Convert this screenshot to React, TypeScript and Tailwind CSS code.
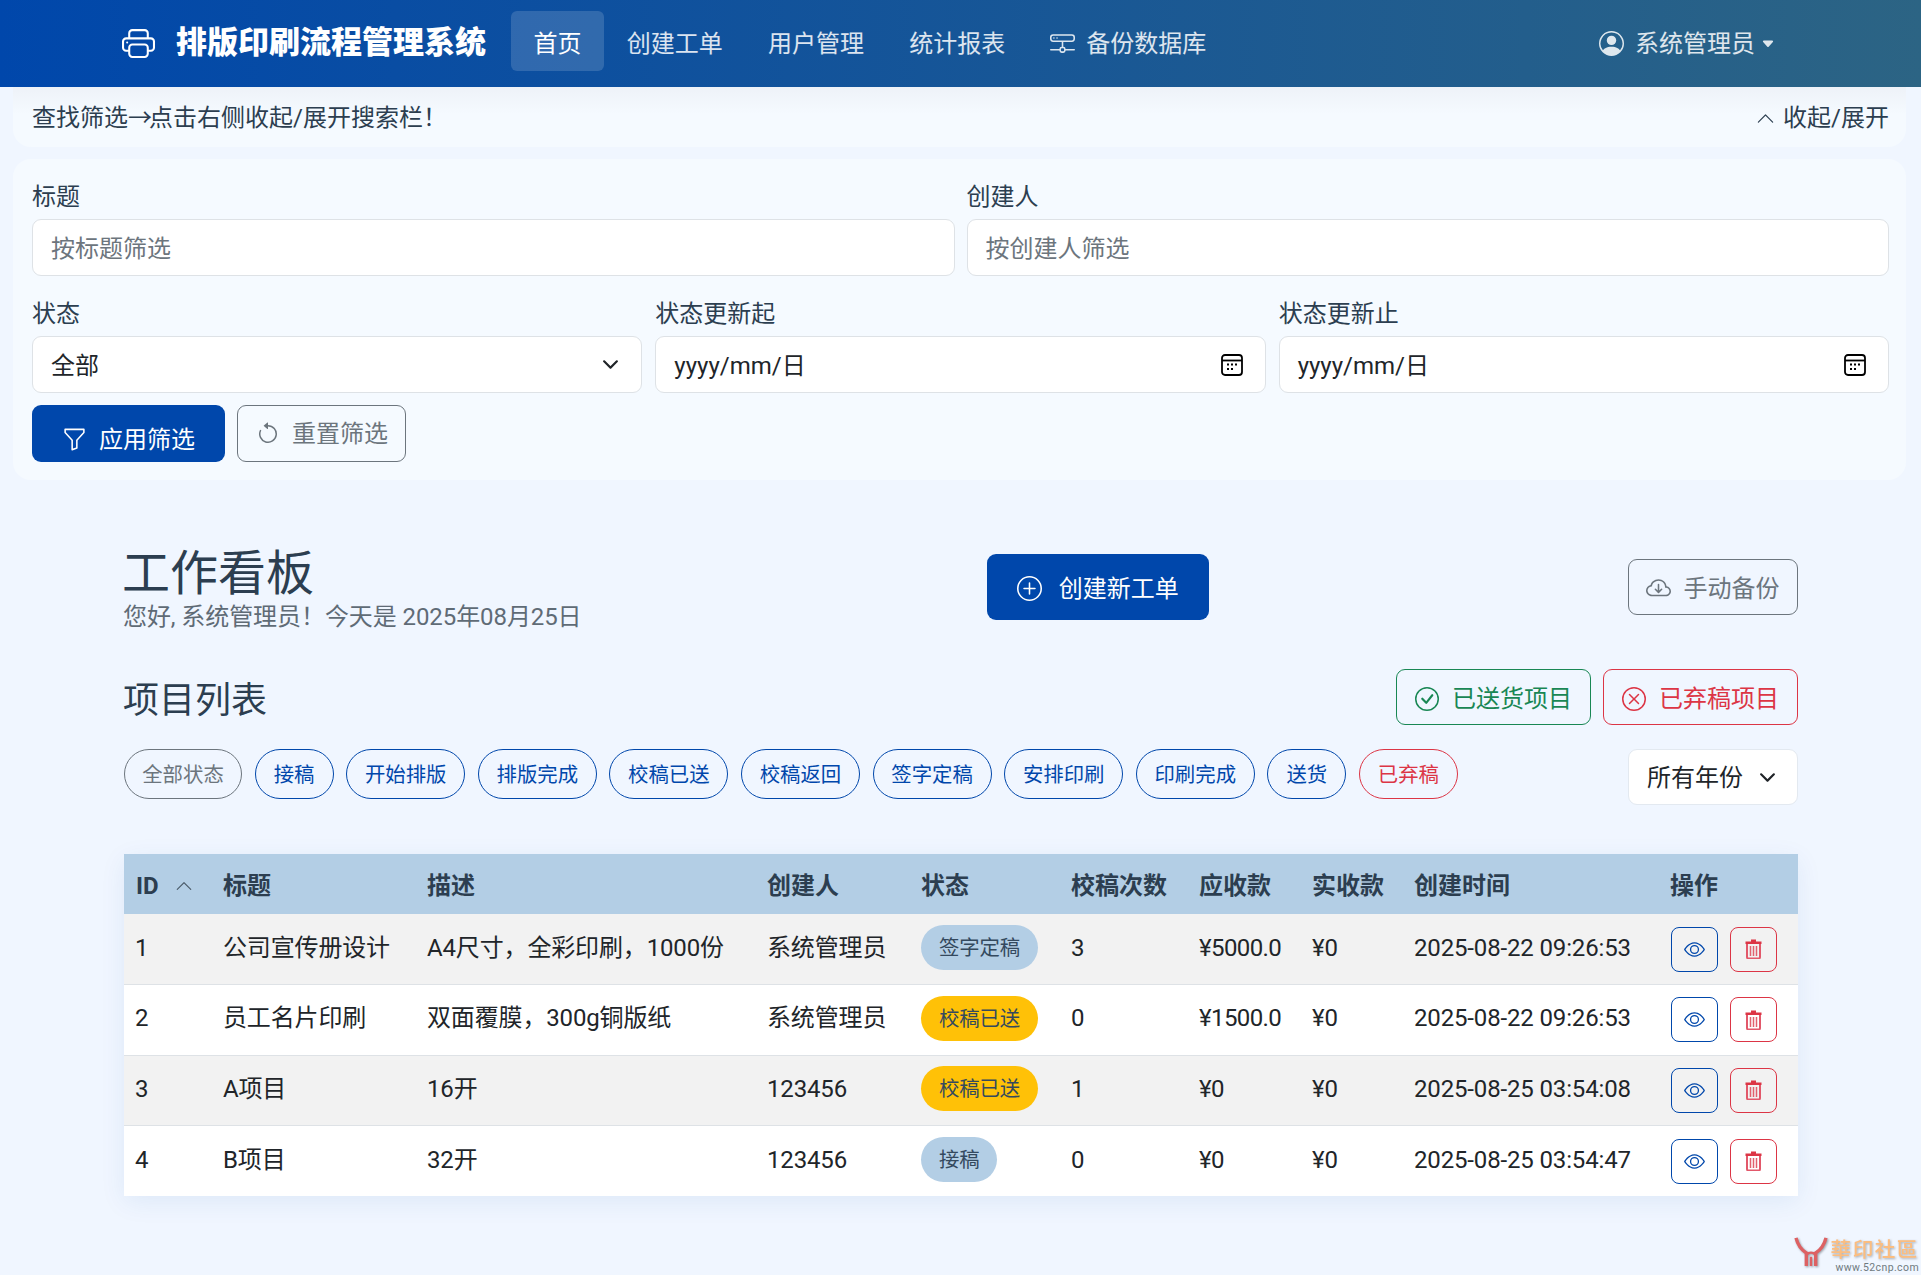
import React from "react";
import {
  BsPrinter, BsHddNetwork, BsPersonCircle, BsCaretDownFill, BsChevronUp, BsChevronDown, BsFunnel,
  BsArrowCounterclockwise, BsPlusCircle, BsCloudArrowDown, BsCheckCircle, BsXCircle, BsEye,
} from "react-icons/bs";

const FONT = "[font-family:Roboto,'Noto_Sans_CJK_SC',sans-serif]";

function Calendar() {
  return (
    <svg width="22" height="22" viewBox="0 0 22 22" fill="none" className="shrink-0 text-black">
      <rect x="1" y="1" width="20" height="20" rx="3" stroke="currentColor" strokeWidth="1.8" />
      <path d="M1 6.500h20" stroke="currentColor" strokeWidth="1.8" />
      <g fill="currentColor">
        <rect x="6" y="9.500" width="2" height="2" />
        <rect x="10" y="9.500" width="2" height="2" />
        <rect x="14" y="9.500" width="2" height="2" />
        <rect x="6" y="14" width="2" height="2" />
        <rect x="10" y="14" width="2" height="2" />
      </g>
    </svg>
  );
}

function Trash() {
  return (
    <svg width="17" height="20" viewBox="0 0 17 20" fill="none">
      <path d="M6 0.500h5v2h5.500v2.500h-16v-2.500h5.500z" fill="#dc3545" />
      <path d="M2 5v13a1.500 1.500 0 0 0 1.500 1.500h10a1.500 1.500 0 0 0 1.500-1.500V5" stroke="#e2586a" strokeWidth="2" />
      <path d="M5.500 7v10M8.500 7v10M11.500 7v10" stroke="#e2606e" strokeWidth="1.500" />
    </svg>
  );
}

function Field({ label, children }: { label: string; children: React.ReactNode }) {
  return (
    <div className="min-w-0">
      <div className="h-9 text-[24px] leading-[29px] text-[#2c3e50]">{label}</div>
      {children}
    </div>
  );
}

const inputCls =
  "block h-[57px] w-full rounded-[9px] border border-[#dee2e6] bg-white px-[18px] pt-[2px] text-[24px] text-[#212529] outline-none placeholder:text-[#6c757d]";

function DateField({ label }: { label: string }) {
  return (
    <Field label={label}>
      <div className="flex h-[57px] w-full items-center justify-between rounded-[9px] border border-[#dee2e6] bg-white pl-[18px] pr-[22px]">
        <span className="pt-[2px] text-[24px] text-[#212529]">yyyy/mm/日</span>
        <Calendar />
      </div>
    </Field>
  );
}

const pills = [
  { t: "全部状态", w: "w-[118px]", c: "border-[#6c757d] text-[#6c757d]" },
  { t: "接稿", w: "w-[79px]", c: "border-[#0047ab] text-[#0047ab]" },
  { t: "开始排版", w: "w-[119px]", c: "border-[#0047ab] text-[#0047ab]" },
  { t: "排版完成", w: "w-[119px]", c: "border-[#0047ab] text-[#0047ab]" },
  { t: "校稿已送", w: "w-[119px]", c: "border-[#0047ab] text-[#0047ab]" },
  { t: "校稿返回", w: "w-[119px]", c: "border-[#0047ab] text-[#0047ab]" },
  { t: "签字定稿", w: "w-[119px]", c: "border-[#0047ab] text-[#0047ab]" },
  { t: "安排印刷", w: "w-[119px]", c: "border-[#0047ab] text-[#0047ab]" },
  { t: "印刷完成", w: "w-[119px]", c: "border-[#0047ab] text-[#0047ab]" },
  { t: "送货", w: "w-[79px]", c: "border-[#0047ab] text-[#0047ab]" },
  { t: "已弃稿", w: "w-[99px]", c: "border-[#dc3545] text-[#dc3545]" },
];

const rows = [
  { id: 1, title: "公司宣传册设计", desc: "A4尺寸，全彩印刷，1000份", by: "系统管理员", st: "签字定稿", tone: "b", n: 3, ar: "¥5000.0", time: "2025-08-22 09:26:53" },
  { id: 2, title: "员工名片印刷", desc: "双面覆膜，300g铜版纸", by: "系统管理员", st: "校稿已送", tone: "y", n: 0, ar: "¥1500.0", time: "2025-08-22 09:26:53" },
  { id: 3, title: "A项目", desc: "16开", by: "123456", st: "校稿已送", tone: "y", n: 1, ar: "¥0", time: "2025-08-25 03:54:08" },
  { id: 4, title: "B项目", desc: "32开", by: "123456", st: "接稿", tone: "b", n: 0, ar: "¥0", time: "2025-08-25 03:54:47" },
];

const th = "px-3 pt-[4px] text-left align-middle text-[24px] font-bold text-[#2c3e50]";
const tdBase = "px-3 pb-[3px] align-middle text-[24px] text-[#212529]";
const td = `${tdBase} tracking-[-0.15px]`;
const navItem = "flex h-[60px] items-center px-[22.6px] pt-[6px]";

export default function App() {
  return (
    <div className={`relative min-h-[1275px] bg-[#f0f6ff] ${FONT}`}>
      <header className="flex h-[87px] items-center bg-[linear-gradient(90deg,#0047ab,#2c6484)] pl-[122px] pr-[146px] text-white">
        <BsPrinter className="mr-[21px] text-[33px]" />
        <span className="mr-[25px] text-[31px] font-black whitespace-nowrap">排版印刷流程管理系统</span>
        <nav className="mb-[6px] flex items-center text-[24px] text-white/85">
          <a className={`${navItem} rounded-[6px] bg-white/15 text-white`}>首页</a>
          <a className={navItem}>创建工单</a>
          <a className={navItem}>用户管理</a>
          <a className={navItem}>统计报表</a>
          <a className={`${navItem} gap-[11px]`}>
            <BsHddNetwork className="text-[25px]" />
            备份数据库
          </a>
        </nav>
        <div className="ml-auto flex items-center text-[24px] text-white/85">
          <BsPersonCircle className="mr-[11px] text-[25px]" />
          系统管理员
          <BsCaretDownFill className="ml-[6px] text-[14px]" />
        </div>
      </header>

      <div className="ml-[13px] mr-[15px]">
        <div className="flex h-[60px] items-center justify-between rounded-b-[18px] bg-[linear-gradient(180deg,#eef2f8,#f5faff_45%)] pl-[19px] pr-[17px] pt-[2px] text-[24px] text-[#2c3e50]">
          <span>
            查找筛选<span className="tracking-[-3px]">→</span>点击右侧收起/展开搜索栏！
          </span>
          <span className="flex items-center gap-[8px]">
            <BsChevronUp className="text-[19px]" />
            收起/展开
          </span>
        </div>

        <section className="mt-3 rounded-[18px] bg-[#f5faff] pb-[18px] pl-[19px] pr-[17px] pt-6">
          <div className="grid grid-cols-2 gap-x-3">
            <Field label="标题">
              <input className={inputCls} placeholder="按标题筛选" />
            </Field>
            <Field label="创建人">
              <input className={inputCls} placeholder="按创建人筛选" />
            </Field>
          </div>
          <div className="mt-6 grid grid-cols-3 gap-x-[13px]">
            <Field label="状态">
              <div className="flex h-[57px] items-center justify-between rounded-[9px] border border-[#dee2e6] bg-white pl-[18px] pr-[22px] text-[24px] text-[#212529]">
                <span className="pt-[2px]">全部</span>
                <BsChevronDown className="text-[17px] [stroke-width:1px] stroke-current" />
              </div>
            </Field>
            <DateField label="状态更新起" />
            <DateField label="状态更新止" />
          </div>
          <div className="mt-3 flex gap-3">
            <button className="flex h-[57px] items-center gap-[12px] rounded-[9px] bg-[#0047ab] pl-[30px] pr-[30px] pt-[12px] text-[24px] text-white">
              <BsFunnel className="text-[25px]" />
              应用筛选
            </button>
            <button className="flex h-[57px] items-center gap-[12px] rounded-[9px] border border-[#6c757d] pl-[18px] pr-[17px] text-[24px] text-[#6c757d]">
              <BsArrowCounterclockwise className="text-[24px]" />
              重置筛选
            </button>
          </div>
        </section>
      </div>

      <main className="ml-[124px] mr-[123px] mt-[61px]">
        <div className="flex items-center justify-between">
          <div>
            <h1 className="-ml-[2px] h-[58px] text-[48px] leading-[65px] font-normal text-[#2c3e50]">工作看板</h1>
            <p className="-ml-px text-[24px] leading-9 tracking-[-0.08px] text-[#5f6b76]">您好, 系统管理员！今天是 2025年08月25日</p>
          </div>
          <button className="mb-[2px] mr-[14px] flex h-[66px] w-[222px] items-center justify-center gap-[17px] rounded-[9px] bg-[#0047ab] pt-[3px] text-[24px] text-white">
            <BsPlusCircle className="text-[25px]" />
            创建新工单
          </button>
          <button className="mb-[2px] flex h-[56px] w-[170px] items-center justify-center gap-3 rounded-[9px] border border-[#6c757d] pt-[3px] text-[24px] text-[#6c757d]">
            <BsCloudArrowDown className="text-[25px]" />
            手动备份
          </button>
        </div>

        <div className="mt-[34px] flex items-center justify-between">
          <h2 className="-ml-px h-[56px] text-[36px] leading-[65px] font-normal text-[#2c3e50]">项目列表</h2>
          <div className="flex gap-[12px]">
            <button className="flex h-[56px] w-[195px] items-center justify-center gap-[13px] rounded-[9px] border border-[#198754] pt-[3px] text-[24px] text-[#198754]">
              <BsCheckCircle className="text-[24px]" />
              已送货项目
            </button>
            <button className="flex h-[56px] w-[195px] items-center justify-center gap-[13px] rounded-[9px] border border-[#dc3545] pt-[3px] text-[24px] text-[#dc3545]">
              <BsXCircle className="text-[24px]" />
              已弃稿项目
            </button>
          </div>
        </div>

        <div className="mt-6 flex items-start justify-between">
          <div className="flex gap-[12.6px]">
            {pills.map((p) => (
              <span key={p.t} className={`flex h-[50px] items-center justify-center rounded-full border-[1.5px] pt-[2px] text-[20.4px] ${p.w} ${p.c}`}>
                {p.t}
              </span>
            ))}
          </div>
          <div className="flex h-[56px] w-[170px] items-center justify-between rounded-[9px] border border-[#e3e9f0] bg-white pl-[18px] pr-[21px] text-[24px] text-[#212529]">
            <span className="pt-[2px]">所有年份</span>
            <BsChevronDown className="text-[17px] [stroke-width:1px] stroke-current" />
          </div>
        </div>

        <div className="mt-[49px] shadow-[0_6px_24px_rgba(0,71,171,0.08)]">
          <table className="w-full table-fixed border-collapse">
            <colgroup>
              <col className="w-[87px]" />
              <col className="w-[204px]" />
              <col className="w-[340px]" />
              <col className="w-[154px]" />
              <col className="w-[150px]" />
              <col className="w-[128px]" />
              <col className="w-[113px]" />
              <col className="w-[102px]" />
              <col className="w-[256px]" />
              <col className="w-[140px]" />
            </colgroup>
            <thead>
              <tr className="h-[60px] bg-[#b3cee5]">
                <th className={th}>
                  <span className="flex items-center gap-[16px]">
                    ID
                    <BsChevronUp className="text-[18px] text-[#4a5a68]" />
                  </span>
                </th>
                {["标题", "描述", "创建人", "状态", "校稿次数", "应收款", "实收款", "创建时间", "操作"].map((h) => (
                  <th key={h} className={`${th} whitespace-nowrap`}>{h}</th>
                ))}
              </tr>
            </thead>
            <tbody>
              {rows.map((r, i) => (
                <tr key={r.id} className={`h-[70.5px] ${i < 3 ? "border-b border-[#dee2e6]" : ""} ${i % 2 === 0 ? "bg-[#f2f2f2]" : "bg-white"}`}>
                  <td className={td}>
                    <span className="-ml-px">{r.id}</span>
                  </td>
                  <td className={td}>{r.title}</td>
                  <td className={td}>{r.desc}</td>
                  <td className={td}>{r.by}</td>
                  <td className={td}>
                    <span className={`inline-flex h-[45px] items-center rounded-full px-[18px] pt-[2px] text-[20.4px] ${r.tone === "b" ? "bg-[#b3cee5] text-[#34495e]" : "bg-[#ffc107] text-[#34495e]"}`}>
                      {r.st}
                    </span>
                  </td>
                  <td className={td}>{r.n}</td>
                  <td className={`${tdBase} tracking-[-0.6px]`}>{r.ar}</td>
                  <td className={td}>¥0</td>
                  <td className={`${td} whitespace-nowrap`}>{r.time}</td>
                  <td className={td}>
                    <div className="ml-[1px] mt-[3px] flex gap-3">
                      <button className="flex h-[45px] w-[47px] items-center justify-center rounded-[8px] border border-[#0047ab] text-[#0047ab]">
                        <BsEye className="text-[21px]" />
                      </button>
                      <button className="flex h-[45px] w-[47px] items-center justify-center rounded-[8px] border border-[#dc3545]">
                        <Trash />
                      </button>
                    </div>
                  </td>
                </tr>
              ))}
            </tbody>
          </table>
        </div>
      </main>

      <div className="absolute bottom-0 right-[2px] flex items-start gap-[3px]">
        <svg width="34" height="30" viewBox="0 0 34 32" fill="none" className="mt-[1px] drop-shadow-[1px_1px_1px_rgba(90,100,110,0.6)]">
          <path d="M1 1c2 8 6 13 11 16v14M33 1c-2 8-6 13-11 16v14" stroke="#dd6163" strokeWidth="3.600" />
          <path d="M12 19c3-3 7-3 10 0M17 21v10" stroke="#dd6163" strokeWidth="2.600" />
        </svg>
        <div className="flex flex-col">
          <span className="text-[20.5px] leading-[25px] font-medium tracking-[1.6px] text-[#fbbd80] [font-family:'Noto_Sans_CJK_TC',sans-serif] drop-shadow-[1px_1px_1px_rgba(90,100,110,0.5)]">華印社區</span>
          <span className="pl-[5px] text-[10.5px] leading-[14px] tracking-[0.4px] text-[#6f7a80]">www.52cnp.com</span>
        </div>
      </div>
    </div>
  );
}
